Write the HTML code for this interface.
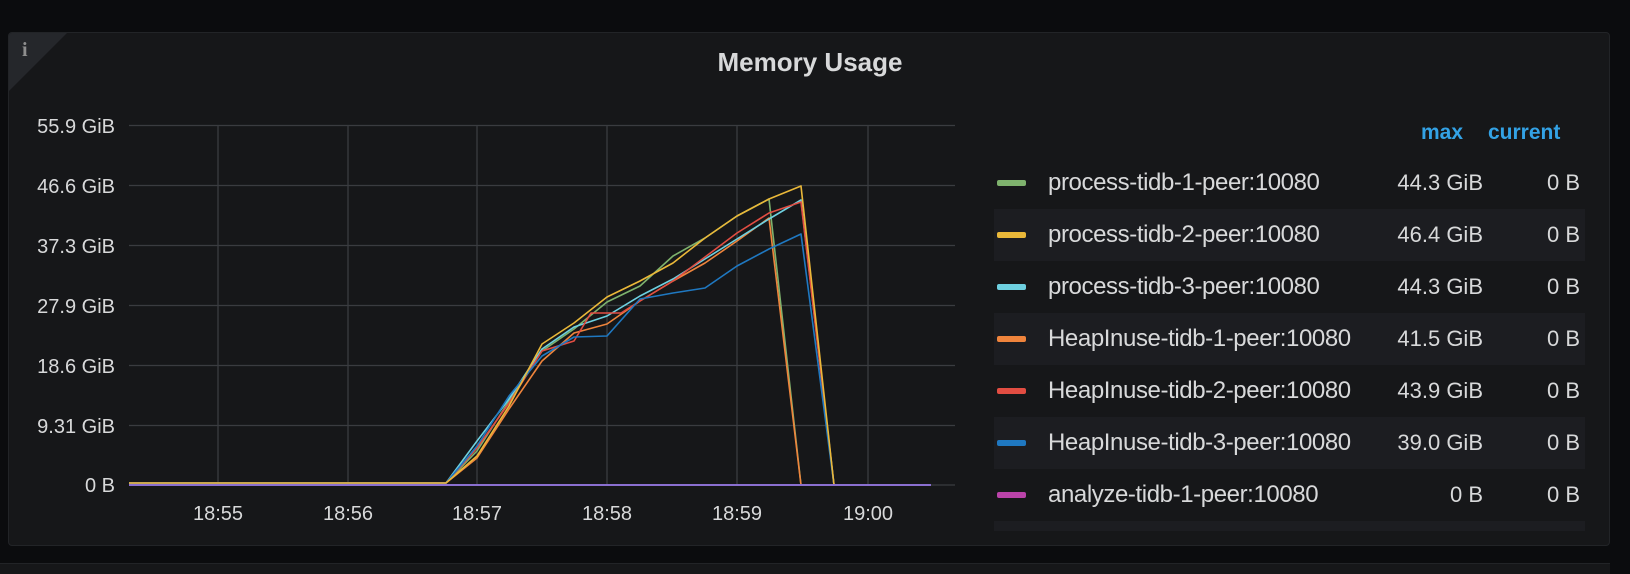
<!DOCTYPE html>
<html><head><meta charset="utf-8"><style>
html,body{margin:0;padding:0;background:#0b0c0e;width:1630px;height:566px;overflow:hidden;font-family:"Liberation Sans",sans-serif;}
.panel{position:absolute;left:8px;top:32px;width:1602px;height:514px;background:#161719;border:1px solid #222427;border-radius:4px;box-sizing:border-box;overflow:hidden}
.bot{position:absolute;left:0;top:563px;width:1610px;height:10px;background:#161719;border-top:1px solid #222427}
.tri{position:absolute;left:0;top:0;width:0;height:0;border-top:58px solid #25272b;border-right:58px solid transparent}
.i{position:absolute;left:13px;top:6px;color:#8e8e8e;font:bold 20px "Liberation Serif",serif}
.title{position:absolute;left:0;width:1602px;top:14px;text-align:center;color:#d8d9da;font-size:26px;font-weight:bold}
.yl{position:absolute;right:1494px;color:#d8d9da;font-size:20px;text-align:right;white-space:nowrap}
.xl{position:absolute;color:#d8d9da;font-size:20px;top:470px;width:80px;text-align:center}
.hdr{position:absolute;top:88px;color:#33a2e5;font-size:21px;font-weight:bold}
.row{position:absolute;left:985px;width:591px;height:52px;color:#d8d9da;font-size:22px}
.row.alt{background:#1c1d21}
.sw{position:absolute;left:3px;top:23px;width:29px;height:6px;border-radius:2px}
.nm{position:absolute;left:54px;top:12px;white-space:nowrap;font-size:24px;letter-spacing:-0.4px}
.mx{position:absolute;right:102px;top:13px}
.cu{position:absolute;right:5px;top:13px}
</style></head><body>
<div class="panel">
<div class="tri"></div><div class="i">i</div>
<div class="title">Memory Usage</div>
<div class="yl" style="top:83px">55.9 GiB</div>
<div class="yl" style="top:143px">46.6 GiB</div>
<div class="yl" style="top:203px">37.3 GiB</div>
<div class="yl" style="top:263px">27.9 GiB</div>
<div class="yl" style="top:323px">18.6 GiB</div>
<div class="yl" style="top:383px">9.31 GiB</div>
<div class="yl" style="top:442px">0 B</div>
<div class="xl" style="left:169px">18:55</div>
<div class="xl" style="left:299px">18:56</div>
<div class="xl" style="left:428px">18:57</div>
<div class="xl" style="left:558px">18:58</div>
<div class="xl" style="left:688px">18:59</div>
<div class="xl" style="left:819px">19:00</div>
<svg style="position:absolute;left:-8px;top:-32px" width="960" height="566">
<g stroke="#3a3c40" stroke-width="1.3">
<line x1="128" y1="124.5" x2="954" y2="124.5"/><line x1="128" y1="184.5" x2="954" y2="184.5"/><line x1="128" y1="244.5" x2="954" y2="244.5"/><line x1="128" y1="304.5" x2="954" y2="304.5"/><line x1="128" y1="364.5" x2="954" y2="364.5"/><line x1="128" y1="424.5" x2="954" y2="424.5"/><line x1="128" y1="484" x2="954" y2="484"/>
<line x1="217" y1="124" x2="217" y2="484"/><line x1="347" y1="124" x2="347" y2="484"/><line x1="476" y1="124" x2="476" y2="484"/><line x1="606" y1="124" x2="606" y2="484"/><line x1="736" y1="124" x2="736" y2="484"/><line x1="867" y1="124" x2="867" y2="484"/>
</g>
<g fill="none" stroke-width="1.6" stroke-linejoin="round">
<polyline stroke="#7eb26d" points="128,482 445,482 476,450 508,400 541,350 573,328 606,301 639,285 672,255 704,237 736,215 768,198 800,484"/>
<polyline stroke="#ef843c" points="128,482 445,482 476,457 508,408 541,360 573,332 606,323 639,300 672,280 704,262 736,240 768,217 800,484"/>
<polyline stroke="#6ed0e0" points="128,482 445,482 476,440 508,398 541,348 573,326 606,315 639,295 672,278 704,258 736,238 768,218 800,199 833,484 930,484"/>
<polyline stroke="#e24d42" points="128,482 445,482 476,447 508,402 541,350 573,340 590,312 620,312 639,300 672,280 704,256 736,232 768,212 800,201 833,484 930,484"/>
<polyline stroke="#1f78c1" points="128,482 445,482 476,445 508,395 541,355 573,336 606,335 639,298 672,292 704,287 736,265 768,248 800,233 833,484 930,484"/>
<polyline stroke="#eab839" points="128,482 445,482 476,455 508,405 541,343 573,322 606,296 639,280 672,262 704,237 736,215 768,198 800,185 833,484"/>
<polyline stroke="#8a6fd0" stroke-width="2" points="128,484 930,484"/>
</g>
</svg>
<div class="hdr" style="left:1412px">max</div>
<div class="hdr" style="left:1479px">current</div>
<div class="row" style="top:124px"><div class="sw" style="background:#7eb26d"></div><div class="nm">process-tidb-1-peer:10080</div><div class="mx">44.3 GiB</div><div class="cu">0 B</div></div>
<div class="row alt" style="top:176px"><div class="sw" style="background:#eab839"></div><div class="nm">process-tidb-2-peer:10080</div><div class="mx">46.4 GiB</div><div class="cu">0 B</div></div>
<div class="row" style="top:228px"><div class="sw" style="background:#6ed0e0"></div><div class="nm">process-tidb-3-peer:10080</div><div class="mx">44.3 GiB</div><div class="cu">0 B</div></div>
<div class="row alt" style="top:280px"><div class="sw" style="background:#ef843c"></div><div class="nm">HeapInuse-tidb-1-peer:10080</div><div class="mx">41.5 GiB</div><div class="cu">0 B</div></div>
<div class="row" style="top:332px"><div class="sw" style="background:#e24d42"></div><div class="nm">HeapInuse-tidb-2-peer:10080</div><div class="mx">43.9 GiB</div><div class="cu">0 B</div></div>
<div class="row alt" style="top:384px"><div class="sw" style="background:#1f78c1"></div><div class="nm">HeapInuse-tidb-3-peer:10080</div><div class="mx">39.0 GiB</div><div class="cu">0 B</div></div>
<div class="row" style="top:436px"><div class="sw" style="background:#ba43a9"></div><div class="nm">analyze-tidb-1-peer:10080</div><div class="mx">0 B</div><div class="cu">0 B</div></div>
<div class="row alt" style="top:488px;height:10px"></div>
</div>
<div class="bot"></div>
</body></html>
